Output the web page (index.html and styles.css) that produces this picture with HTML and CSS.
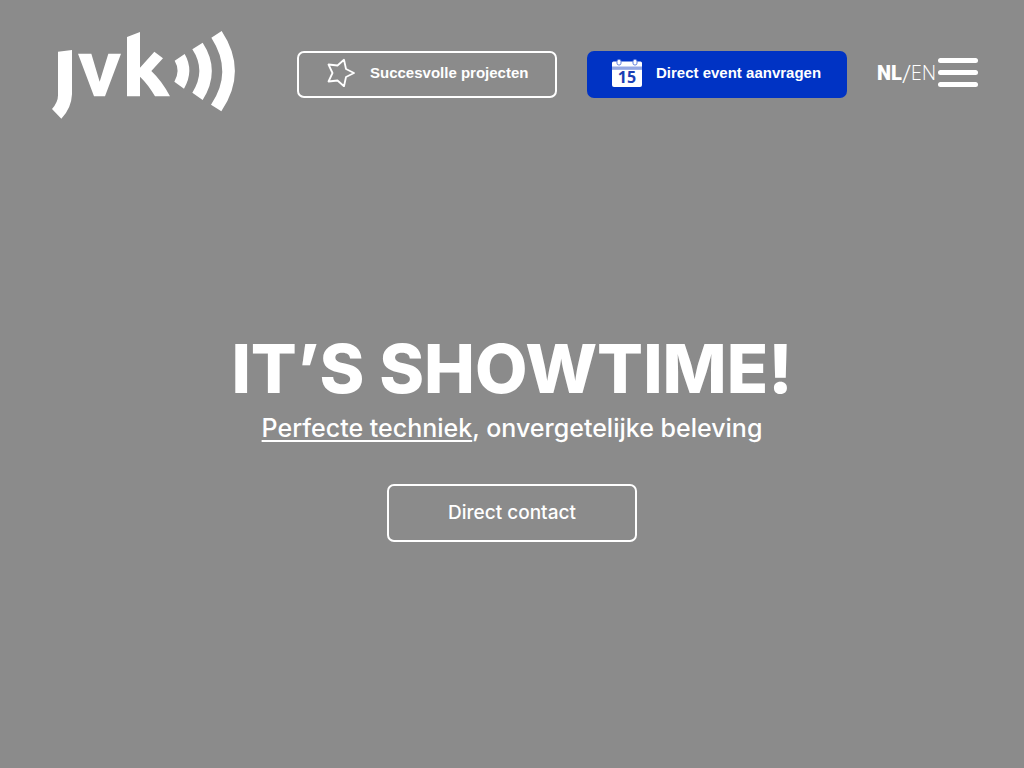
FILE: index.html
```html
<!DOCTYPE html>
<html lang="nl">
<head>
<meta charset="utf-8">
<meta name="viewport" content="width=device-width, initial-scale=1">
<title>JVK</title>
<link rel="stylesheet" href="styles.css">
</head>
<body>
<header class="header">
  <a class="logo" href="#" aria-label="JVK">
    <svg viewBox="36 29 549 264" width="183" height="88" fill="#fff" aria-hidden="true">
      <path d="M54 94L96 89V222Q94 265 64 295L36 266Q54 246 54 225Z"/>
      <path d="M114 100H154L179 184L205 100H243L195 228H162Z"/>
      <path d="M261 50L300 35V142L343 94L369 114L334 152Q366 182 390 228H345Q325 193 300 169V228H261Z"/>
      <path d="M404 121L434 101Q463 151 432 205L403 184Q422 151 404 121Z"/>
      <path d="M457 87L488 67Q543 151 488 239L457 217Q499 151 457 87Z"/>
      <path d="M514 52L545 32Q625 153 544 273L513 253Q580 154 514 52Z"/>
    </svg>
  </a>
  <nav class="actions">
    <a class="button button-outline" href="#">
      <svg class="star" viewBox="0 0 28 28" width="28" height="28" fill="none" stroke="#fff" stroke-width="1.8" stroke-linejoin="round" aria-hidden="true">
        <path d="M27 14L19 18L17 27.200L10.500 21.500L1.500 22.500L5.500 14L1.500 5.500L10.500 6.500L17 .8L19 10Z"/>
      </svg>
      <span>Succesvolle projecten</span>
    </a>
    <a class="button button-blue" href="#">
      <svg class="calendar" viewBox="0 0 30 28" width="30" height="28" aria-hidden="true">
        <path d="M0 4Q0 2.500 1.500 2.500H28.500Q30 2.500 30 4V8H0Z" fill="#fff"/>
        <path d="M0 7.500H30V10.500H0Z" fill="#94a8e4"/>
        <path d="M0 10.500H30V26Q30 28 28 28H2Q0 28 0 26Z" fill="#fff"/>
        <rect x="5" y=".5" width="4" height="5.500" rx="1.800" fill="#fff" stroke="#5e7ddb"/>
        <rect x="21" y=".5" width="4" height="5.500" rx="1.800" fill="#fff" stroke="#5e7ddb"/>
        <text x="15" y="24" text-anchor="middle" class="calendar-day">15</text>
      </svg>
      <span>Direct event aanvragen</span>
    </a>
    <div class="tools">
      <div class="languages"><a class="current" href="#">NL</a><span class="slash">/</span><a href="#">EN</a></div>
      <button class="menu" type="button" aria-label="Menu"><span></span><span></span><span></span></button>
    </div>
  </nav>
</header>
<main class="hero">
  <h1>IT’S SHOWTIME!</h1>
  <p class="tagline"><a href="#">Perfecte techniek</a>, onvergetelijke beleving</p>
  <a class="contact" href="#">Direct contact</a>
</main>
</body>
</html>
```
FILE: styles.css
```css
* { box-sizing: border-box; }
body {
  margin: 0;
  min-height: 100vh;
  display: flex;
  flex-direction: column;
  background: #8b8b8b;
  color: #fff;
  font-family: Inter, "Liberation Sans", sans-serif;
}
a { color: inherit; text-decoration: none; }
svg { display: block; flex: none; overflow: visible; }
.header {
  display: flex;
  align-items: center;
  justify-content: space-between;
  padding: 30px 46px 30px 52px;
}
.actions { display: flex; align-items: center; gap: 30px; }
.button {
  display: flex;
  align-items: center;
  width: 260px;
  height: 47px;
  padding: 0 24px 2px;
  border: 2px solid #fff;
  border-radius: 7px;
  font: bold 15px/20px "Liberation Sans", Arial, sans-serif;
  white-space: nowrap;
}
.button-outline { padding-left: 28px; gap: 15px; }
.button-blue { gap: 14px; padding-left: 23px; background: #0033c4; border-color: #0033c4; }
.calendar-day { font: bold 16px "Noto Sans", sans-serif; fill: #1c3fb5; }
.tools { display: flex; align-items: center; }
.languages {
  display: flex;
  align-items: center;
  justify-content: space-between;
  width: 61px;
  padding: 0 2px 2px 0;
  font: 300 20px/28px "Open Sans", "Noto Sans", sans-serif;
}
.current { font-family: Roboto, sans-serif; font-weight: 900; }
.slash { font-size: 26px; }
.menu {
  display: flex;
  flex-direction: column;
  gap: 7px;
  width: 40px;
  padding: 0 0 3px;
  border: 0;
  background: none;
}
.menu span { width: 100%; height: 5px; border-radius: 3px; background: #fff; }
.hero {
  display: flex;
  flex-direction: column;
  align-items: center;
  padding: 180px 20px 40px;
  text-align: center;
}
h1 { margin: 0; font-size: 68px; line-height: 80px; font-weight: 800; }
.tagline { margin: 0 0 36px; font-size: 25px; line-height: 40px; font-weight: 500; }
.tagline a { text-decoration: underline; text-decoration-thickness: 2px; text-underline-offset: 3px; text-decoration-skip-ink: none; }
.contact {
  width: 250px;
  padding: 14px 20px;
  border: 2px solid #fff;
  border-radius: 7px;
  font-size: 19px;
  line-height: 26px;
  font-weight: 500;
}
```
